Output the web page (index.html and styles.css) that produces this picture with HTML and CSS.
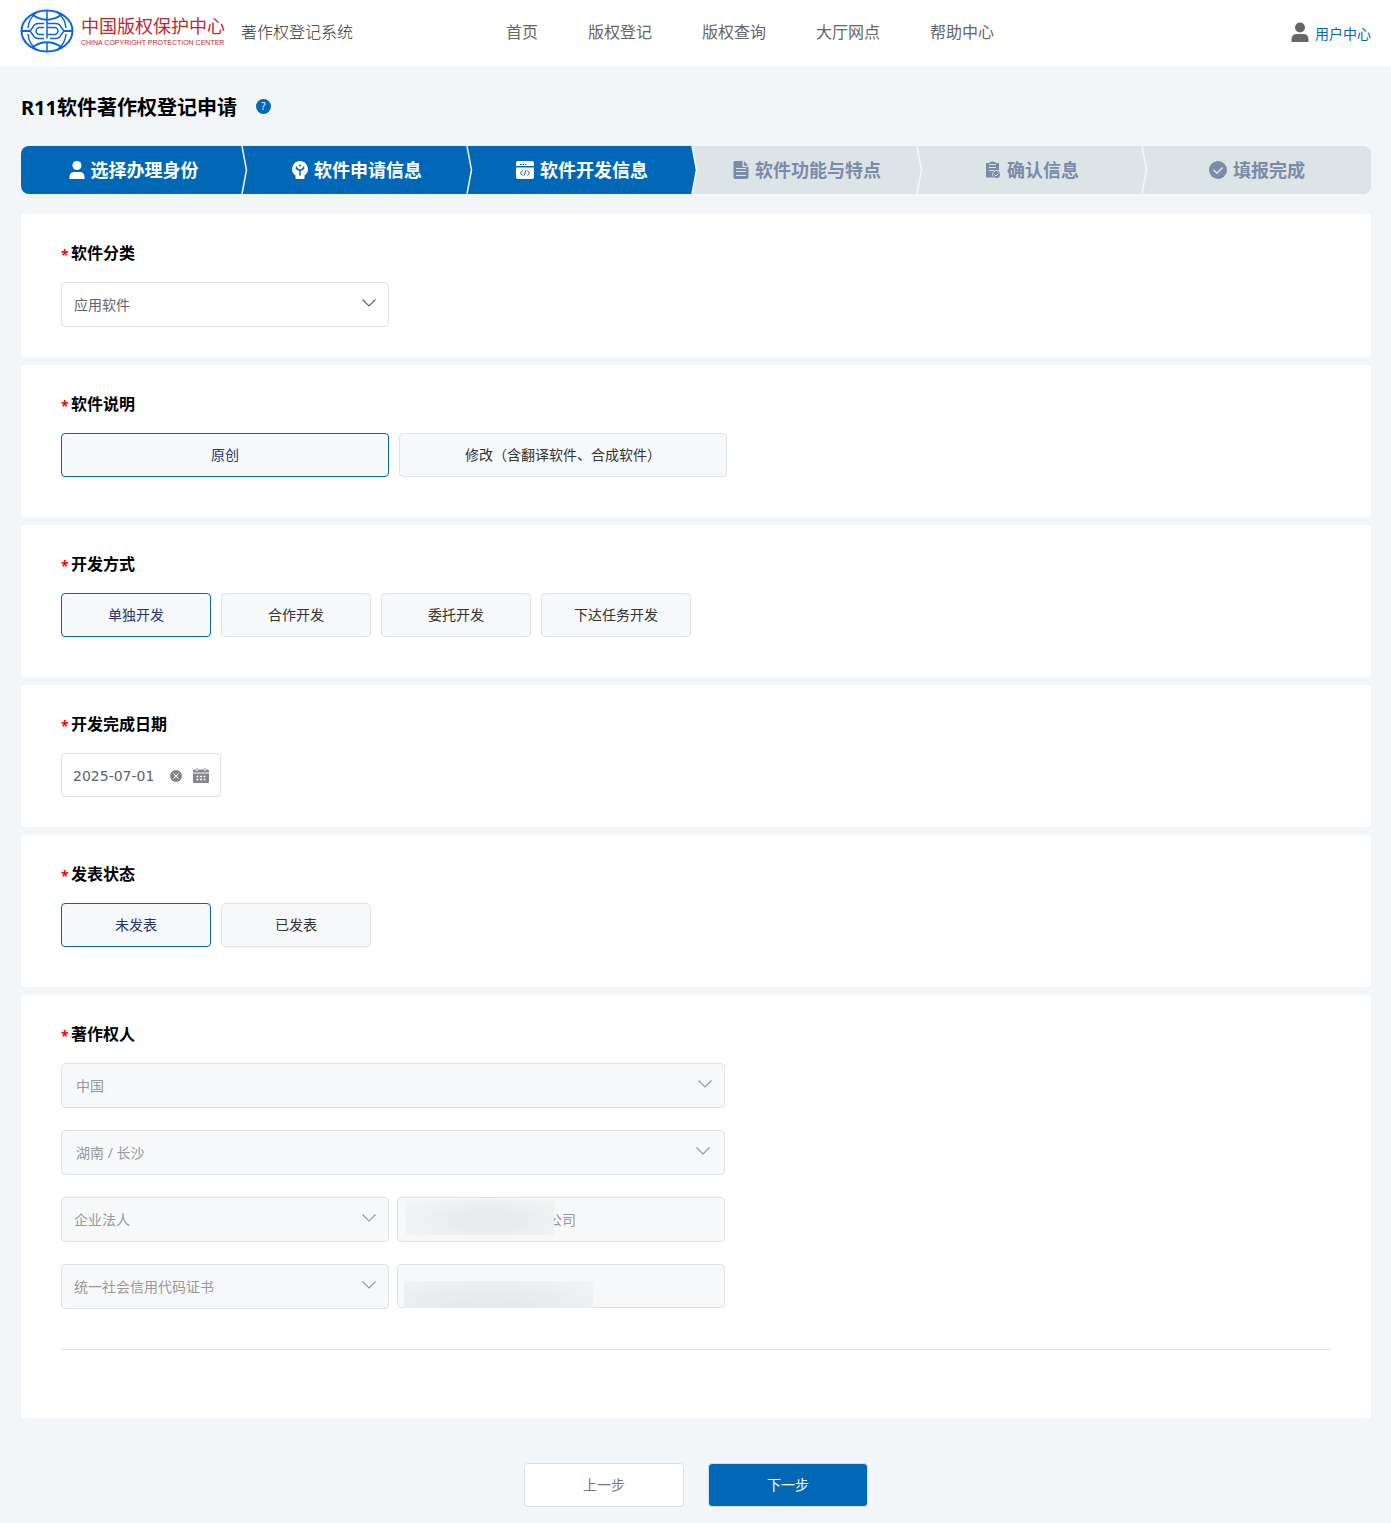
FILE: index.html
```html
<!DOCTYPE html>
<html lang="zh-CN">
<head>
<meta charset="utf-8">
<meta name="viewport" content="width=device-width, initial-scale=1">
<title>R11软件著作权登记申请</title>
<link rel="stylesheet" href="styles.css">
</head>
<body>
<header class="header">
  <a class="brand" href="#">
    <svg class="brand-mark" viewBox="0 0 54 44" width="54" height="44" fill="none" stroke="#0a66dc" stroke-width="1.5" aria-hidden="true">
      <ellipse cx="27" cy="22" rx="25.500" ry="20.500" stroke-width="2"/>
      <path d="M27 1.500V11M27 33v9.500"/>
      <path d="M12 5.500Q27 16 42 5.500M12 38.500Q27 28 42 38.500" stroke-width="2"/>
      <path d="M16 4Q9 9 8 19M16 40Q9 35 8 25M38 4Q45 9 46 19M38 40Q45 35 46 25"/>
      <path d="M2 22H10M44 22H52" stroke-width="2"/>
      <path d="M24 14.500H18.500Q14.500 14.500 13 18L10 22L13 26Q14.500 29.500 18.500 29.500H24M24 18.500H19.500A3.500 3.500 0 0 0 19.500 25.500H24M27 11V29.500M27 14.500H35.500Q39.500 14.500 41 18L44 22L41 26Q39.500 29.500 35.500 29.500H30M27 18.500H34.500A3.500 3.500 0 0 1 34.500 25.500H27"/>
    </svg>
    <span class="brand-name">
      <span class="brand-cn">中国版权保护中心</span>
      <span class="brand-en">CHINA COPYRIGHT PROTECTION CENTER</span>
    </span>
  </a>
  <span class="system">著作权登记系统</span>
  <nav class="nav">
    <a href="#">首页</a>
    <a href="#">版权登记</a>
    <a href="#">版权查询</a>
    <a href="#">大厅网点</a>
    <a href="#">帮助中心</a>
  </nav>
  <a class="user" href="#">
    <svg viewBox="0 0 18 20" width="18" height="20" fill="#666" aria-hidden="true"><circle cx="9" cy="5.500" r="5"/><path d="M0.500 20V17.500Q0.500 12 6 12H12Q17.500 12 17.500 17.500V20Z"/></svg>
    <span>用户中心</span>
  </a>
</header>

<main class="page">
  <div class="title-row">
    <h1>R11软件著作权登记申请</h1>
    <button class="help" type="button" aria-label="帮助">?</button>
  </div>

  <ol class="steps">
    <li class="step done">
      <svg viewBox="0 0 16 18" width="16" height="18" fill="currentColor" aria-hidden="true"><circle cx="8" cy="4.500" r="4.500"/><path d="M0.500 18V16Q0.500 11 5.500 11H10.500Q15.500 11 15.500 16V18Z"/></svg>
      <span>选择办理身份</span>
      <svg class="arrow" viewBox="0 0 8 48" width="8" height="48" aria-hidden="true"><path d="M1 0L5.500 24L1 48"/></svg>
    </li>
    <li class="step done">
      <svg viewBox="0 0 16 18" width="16" height="18" aria-hidden="true"><path fill="currentColor" d="M8 0A8 8 0 0 1 12.500 14.500V17Q12.500 18 11.500 18H4.500Q3.500 18 3.500 17V14.500A8 8 0 0 1 8 0Z"/><path class="cut" d="M8 14.500V9.500L4.500 7.500M8 9.500L11.500 7.500M4.500 5.500V8M11.500 5.500V8M7 4.500H9"/></svg>
      <span>软件申请信息</span>
      <svg class="arrow" viewBox="0 0 8 48" width="8" height="48" aria-hidden="true"><path d="M1 0L5.500 24L1 48"/></svg>
    </li>
    <li class="step done">
      <svg viewBox="0 0 18 18" width="18" height="18" aria-hidden="true"><path fill="currentColor" d="M2 0H16Q18 0 18 2V5H0V2Q0 0 2 0ZM0 6.500H18V16Q18 18 16 18H2Q0 18 0 16Z"/><path class="cut thin" d="M4 3.500H5.500M6.500 3.500H8M9 3.500H10.500M6.500 9.500L4.500 12L6.500 14.500M11.500 9.500L13.500 12L11.500 14.500M9.800 9.500L8.200 14.500"/></svg>
      <span>软件开发信息</span>
      <svg class="arrow" viewBox="0 0 8 48" width="8" height="48" aria-hidden="true"><path d="M1 0L5.500 24L1 48"/></svg>
    </li>
    <li class="step">
      <svg viewBox="0 0 16 18" width="16" height="18" aria-hidden="true"><path fill="currentColor" d="M2 0H9.500V6H15.500V16Q15.500 18 13.500 18H2Q0.500 18 0.500 16V2Q0.500 0 2 0ZM10.800 0L15.500 4.800H10.800Z"/><path class="cut thin" d="M3 7.500H13M3 10.500H13M3 14.500H13"/></svg>
      <span>软件功能与特点</span>
      <svg class="arrow" viewBox="0 0 8 48" width="8" height="48" aria-hidden="true"><path d="M1 0L5.500 24L1 48"/></svg>
    </li>
    <li class="step">
      <svg viewBox="0 0 16 18" width="16" height="18" aria-hidden="true"><path fill="currentColor" d="M1 2H4.500V1H6Q7.500 -0.500 9 1H10.500V2H14V10A4 4 0 0 0 9 16.500H1Z"/><circle cx="11.500" cy="13.500" r="3.500" fill="currentColor"/><path class="cut thin" d="M4 3.500H11M4 6.500H11M4 9.500H9M9.500 13.500L11 15L13.500 12.500"/></svg>
      <span>确认信息</span>
      <svg class="arrow" viewBox="0 0 8 48" width="8" height="48" aria-hidden="true"><path d="M1 0L5.500 24L1 48"/></svg>
    </li>
    <li class="step">
      <svg viewBox="0 0 18 18" width="18" height="18" aria-hidden="true"><circle cx="9" cy="9" r="9" fill="currentColor"/><path class="cut" d="M4.500 9L8 12.300L13.500 6.500"/></svg>
      <span>填报完成</span>
    </li>
  </ol>

  <form class="form">
    <section class="card">
      <label class="label" for="category">软件分类</label>
      <div class="select half">
        <select id="category"><option>应用软件</option></select>
        <svg viewBox="0 0 16 10" width="16" height="10" aria-hidden="true"><path d="M1.500 1.500L8 8L14.500 1.500"/></svg>
      </div>
    </section>

    <section class="card tall" role="radiogroup" aria-labelledby="l-desc">
      <span class="label" id="l-desc">软件说明</span>
      <div class="options">
        <label class="option wide"><input type="radio" name="desc" checked><span>原创</span></label>
        <label class="option wide"><input type="radio" name="desc"><span>修改（含翻译软件、合成软件）</span></label>
      </div>
    </section>

    <section class="card tall" role="radiogroup" aria-labelledby="l-mode">
      <span class="label" id="l-mode">开发方式</span>
      <div class="options">
        <label class="option"><input type="radio" name="mode" checked><span>单独开发</span></label>
        <label class="option"><input type="radio" name="mode"><span>合作开发</span></label>
        <label class="option"><input type="radio" name="mode"><span>委托开发</span></label>
        <label class="option"><input type="radio" name="mode"><span>下达任务开发</span></label>
      </div>
    </section>

    <section class="card">
      <label class="label" for="date">开发完成日期</label>
      <div class="date">
        <input id="date" type="text" value="2025-07-01">
        <svg viewBox="0 0 12 12" width="12" height="12" aria-hidden="true"><circle cx="6" cy="6" r="6" fill="#85868a"/><path d="M3.500 3.500L8.500 8.500M8.500 3.500L3.500 8.500" stroke="#fff"/></svg>
        <svg viewBox="0 0 16 16" width="16" height="16" aria-hidden="true"><path fill="#85868a" d="M0 5.500H16V14Q16 15 14.500 15H1.500Q0 15 0 14ZM0 4.500V3Q0 1.500 1.500 1.500H3V3H5V1.500H11V3H13V1.500H14.500Q16 1.500 16 3V4.500ZM3.500 0H4.500V2.500H3.500ZM11.500 0H12.500V2.500H11.500Z"/><path d="M3.500 8.500H12.500M3.500 11.500H12.500" stroke="#fff" stroke-width="1.500" stroke-dasharray="2 1.500"/></svg>
      </div>
    </section>

    <section class="card tall" role="radiogroup" aria-labelledby="l-pub">
      <span class="label" id="l-pub">发表状态</span>
      <div class="options">
        <label class="option"><input type="radio" name="pub" checked><span>未发表</span></label>
        <label class="option"><input type="radio" name="pub"><span>已发表</span></label>
      </div>
    </section>

    <section class="card owner">
      <label class="label" for="country">著作权人</label>
      <div class="fields">
        <div class="select full inset">
          <select id="country" disabled><option>中国</option></select>
          <svg viewBox="0 0 16 10" width="16" height="10" aria-hidden="true"><path d="M1.500 1.500L8 8L14.500 1.500"/></svg>
        </div>
        <div class="select full inset region">
          <select aria-label="地区" disabled><option>湖南 / 长沙</option></select>
          <svg viewBox="0 0 16 10" width="16" height="10" aria-hidden="true"><path d="M1.500 1.500L8 8L14.500 1.500"/></svg>
        </div>
        <div class="select">
          <select aria-label="类别" disabled><option>企业法人</option></select>
          <svg viewBox="0 0 16 10" width="16" height="10" aria-hidden="true"><path d="M1.500 1.500L8 8L14.500 1.500"/></svg>
        </div>
        <div class="masked name">
          <input type="text" aria-label="名称" value="公司" disabled>
          <span class="mask"></span>
        </div>
        <div class="select">
          <select aria-label="证件类型" disabled><option>统一社会信用代码证书</option></select>
          <svg viewBox="0 0 16 10" width="16" height="10" aria-hidden="true"><path d="M1.500 1.500L8 8L14.500 1.500"/></svg>
        </div>
        <div class="masked code">
          <input type="text" aria-label="证件号码" disabled>
          <span class="mask"></span>
        </div>
      </div>
      <hr class="divider">
    </section>

    <div class="actions">
      <button class="btn" type="button">上一步</button>
      <button class="btn primary" type="submit">下一步</button>
    </div>
  </form>
</main>
</body>
</html>
```
FILE: styles.css
```css
* { box-sizing: border-box; }

body {
  margin: 0;
  background: #f2f6f9;
  color: #333;
  font: 14px/20px "Noto Sans", "Noto Sans CJK SC", sans-serif;
}

a { color: inherit; text-decoration: none; }

input, select, button { font: inherit; color: inherit; margin: 0; }

.header {
  display: flex;
  align-items: center;
  height: 66px;
  padding: 0 20px 2px;
  background: #fff;
}

.brand { display: flex; align-items: center; gap: 7px; padding-bottom: 2px; }
.brand-name { display: flex; flex-direction: column; width: 144px; color: #c1272d; white-space: nowrap; }
.brand-cn { font-size: 18px; line-height: 24px; }
.brand-en { font: 7px/10px "Liberation Sans", sans-serif; }

.system { margin-left: 16px; font-size: 16px; font-weight: 300; }

.nav { display: flex; gap: 50px; margin-left: 153px; font-size: 16px; color: #666; }

.user { display: flex; align-items: center; gap: 6px; margin-left: auto; color: #0068b7; }
.user span { padding-top: 4px; }

.page { padding: 0 20px 16px 21px; }

.title-row { display: flex; align-items: center; gap: 19px; height: 80px; }

h1 { margin: 0; padding-top: 3px; font-size: 20px; line-height: 28px; font-weight: 700; color: #000; }

.help {
  width: 15px;
  height: 15px;
  padding: 0;
  border: 0;
  border-radius: 50%;
  background: #0068b7;
  color: #fff;
  font-size: 10px;
  line-height: 15px;
}

.steps {
  display: grid;
  grid-template-columns: repeat(6, 1fr);
  margin: 0 0 20px;
  padding: 0;
  list-style: none;
  border-radius: 8px;
  overflow: hidden;
  background: #dde4e7;
}

.step {
  position: relative;
  display: flex;
  align-items: center;
  justify-content: center;
  gap: 6px;
  height: 48px;
  padding-right: 3px;
  background: #dde4e7;
  color: #7a8ca8;
  font-size: 18px;
  font-weight: 700;
}
.step:first-child { padding-right: 0; }
.step.done { background: #0068b7; color: #fff; }

.cut { fill: none; stroke: #dde4e7; stroke-width: 1.5; }
.done .cut { stroke: #0068b7; }
.cut.thin { stroke-width: 1; }

.step > * { position: relative; }
.step > .arrow { position: absolute; top: 0; right: -3px; z-index: 1; }
.arrow path { fill: none; stroke: #f2f6f9; stroke-width: 1.5; }

/* The last finished step ends in a point on the pending colour */
.step.done:has(+ .step:not(.done)) { background: #dde4e7; }
.step.done:has(+ .step:not(.done))::before {
  content: "";
  position: absolute;
  inset: 0;
  background: #0068b7;
  clip-path: polygon(0 0, calc(100% - 4px) 0, 100% 50%, calc(100% - 4px) 100%, 0 100%);
}

.form { display: flex; flex-direction: column; gap: 8px; }

.card { padding: 29px 40px 30px; border-radius: 3px; background: #fff; }
.card.tall { padding-bottom: 40px; }
.card.owner { padding-bottom: 68px; }

.label {
  display: flex;
  align-items: center;
  height: 20px;
  margin-bottom: 19px;
  font-size: 16px;
  font-weight: 700;
  color: #000;
}
.label::before { content: "*"; width: 10px; padding-top: 4px; color: #f00; font-size: 14px; }

.select { position: relative; }
.select.half { width: 328px; max-width: 100%; }
.select select {
  display: block;
  width: 100%;
  height: 45px;
  padding: 0 36px 0 12px;
  border: 1px solid #dde4e8;
  border-radius: 4px;
  background: #fff;
  color: #666;
  appearance: none;
}
.select.inset select { padding-left: 14px; }
.select select:disabled { background: #f6f8fa; color: #999; opacity: 1; }
.select svg { position: absolute; top: 16px; right: 12px; fill: none; stroke: #666; stroke-width: 1.2; pointer-events: none; }
.select.region svg { right: 14px; }
.select select:disabled + svg { stroke: #999; }

.options { display: flex; flex-wrap: wrap; gap: 10px; }
.option { position: relative; width: 150px; }
.option.wide { width: 328px; }
.option input { position: absolute; inset: 0; opacity: 0; }
.option span {
  display: flex;
  align-items: center;
  justify-content: center;
  height: 44px;
  border: 1px solid #dde4e8;
  border-radius: 4px;
  background: #f6f8fa;
}
.option input:checked + span { border-color: #0068b7; color: #26366b; }

.date {
  display: flex;
  align-items: center;
  width: 160px;
  height: 44px;
  padding: 2px 11px 0;
  border: 1px solid #dcdfe6;
  border-radius: 4px;
}
.date input {
  flex: 1;
  min-width: 0;
  padding: 0;
  border: 0;
  outline: 0;
  background: none;
  color: #606266;
  font-family: "DejaVu Sans", sans-serif;
}
.date svg + svg { margin-left: 11px; }

.fields { display: grid; grid-template-columns: 328px 328px; gap: 22px 8px; }
.full { grid-column: 1 / -1; }

.masked { position: relative; }
.masked input {
  display: block;
  width: 100%;
  height: 44px;
  padding: 0 12px 0 150px;
  border: 1px solid #dde4e8;
  border-radius: 4px;
  background: #f6f8fa;
  color: #999;
}
.masked.name input { height: 45px; padding-bottom: 2px; }
.mask { position: absolute; }
.name .mask {
  left: 9px;
  top: 2px;
  width: 148px;
  height: 36px;
  background: radial-gradient(ellipse at 55% 60%, #ebecee 30%, #f4f6f8 100%);
}
.code .mask {
  left: 7px;
  top: 17px;
  width: 189px;
  height: 27px;
  background: radial-gradient(ellipse at 45% 100%, #e6e9eb 20%, #f2f4f6 100%);
}

.divider { height: 1px; margin: 40px 0 0; border: 0; background: #dfe2e6; }

.actions { display: flex; justify-content: center; gap: 24px; margin-top: 37px; }
.btn {
  width: 160px;
  height: 44px;
  border: 1px solid #dcdfe6;
  border-radius: 4px;
  background: #fff;
  color: #777;
}
.btn.primary { background: #0068b7; color: #fff; }
```
